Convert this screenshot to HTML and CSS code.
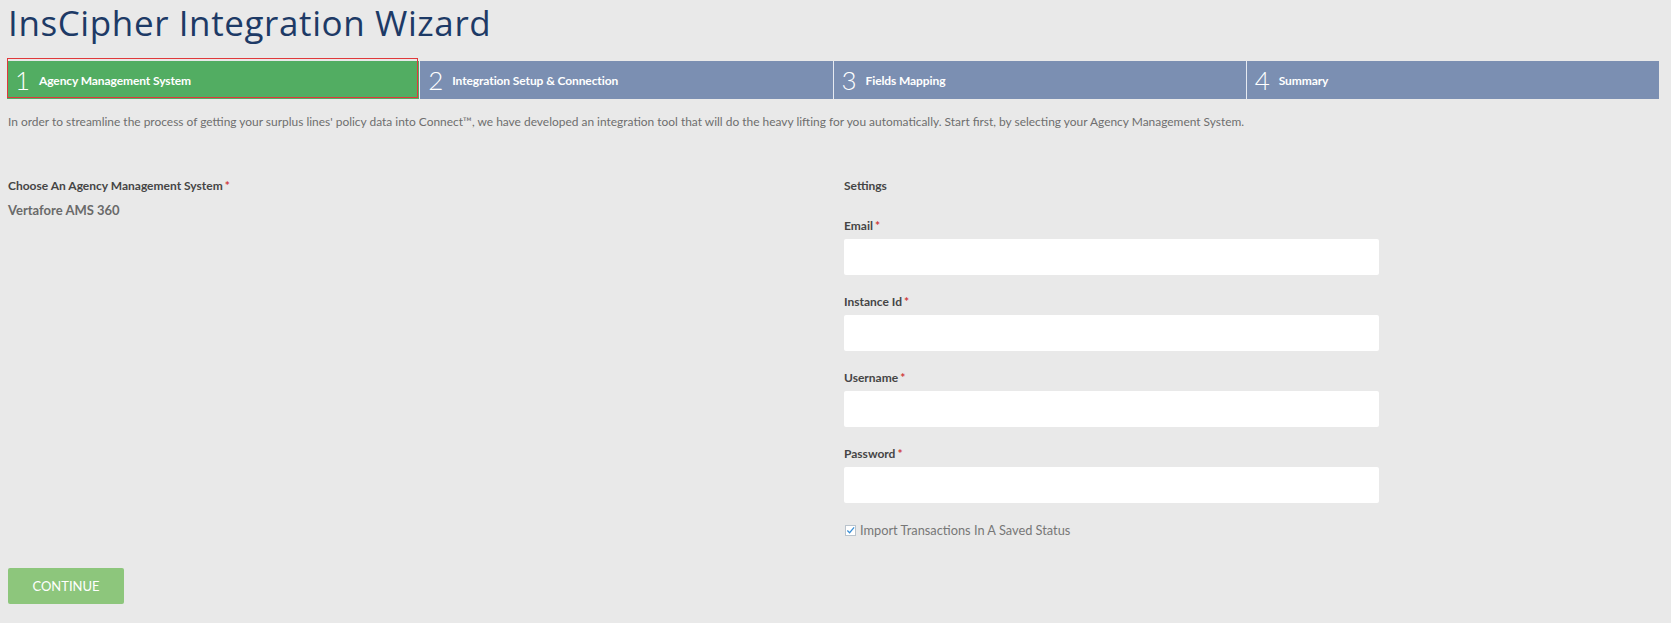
FILE: index.html
```html
<!DOCTYPE html>
<html lang="en">
<head>
<meta charset="utf-8">
<title>InsCipher Integration Wizard</title>
<link rel="stylesheet" href="styles.css">
</head>
<body>
<div class="page">
  <h1 class="title">InsCipher Integration Wizard</h1>
  <ol class="steps">
    <li class="step active"><span class="num">1</span><span class="step-label">Agency Management System</span></li>
    <li class="step"><span class="num">2</span><span class="step-label">Integration Setup &amp; Connection</span></li>
    <li class="step"><span class="num">3</span><span class="step-label">Fields Mapping</span></li>
    <li class="step"><span class="num">4</span><span class="step-label">Summary</span></li>
  </ol>
  <p class="intro">In order to streamline the process of getting your surplus lines' policy data into Connect™, we have developed an integration tool that will do the heavy lifting for you automatically. Start first, by selecting your Agency Management System.</p>
  <div class="columns">
    <div class="col col-left">
      <div class="field-label">Choose An Agency Management System<span class="req">*</span></div>
      <div class="ams">Vertafore AMS 360</div>
    </div>
    <div class="col col-right">
      <div class="field-label settings">Settings</div>
      <div class="field">
        <label class="field-label">Email<span class="req">*</span></label>
        <input class="input" type="text">
      </div>
      <div class="field">
        <label class="field-label">Instance Id<span class="req">*</span></label>
        <input class="input" type="text">
      </div>
      <div class="field">
        <label class="field-label">Username<span class="req">*</span></label>
        <input class="input" type="text">
      </div>
      <div class="field">
        <label class="field-label">Password<span class="req">*</span></label>
        <input class="input" type="password">
      </div>
      <label class="check">
        <span class="box"><svg width="10" height="9" viewBox="0 0 10 9"><path d="M1.5 4.5 L4 7 L9 1" fill="none" stroke="#3a8fd6" stroke-width="1.4"/></svg></span>
        Import Transactions In A Saved Status
      </label>
    </div>
  </div>
  <button class="continue" type="button">CONTINUE</button>
</div>
</body>
</html>
```

FILE: styles.css
```css
* { box-sizing: border-box; }
html, body { margin: 0; padding: 0; background: #e9e9e9; }
body { font-family: Lato, "Liberation Sans", sans-serif; color: #444; }

.page { padding: 0 12px 0 7px; }

.title {
  margin: 0;
  padding: 3px 0 0 1px;
  font-family: "Open Sans", Lato, sans-serif;
  font-weight: 500;
  font-size: 35px;
  line-height: 40px;
  color: #1d3a66;
  letter-spacing: 0.6px;
}

.steps {
  list-style: none;
  margin: 18px 0 0 0;
  padding: 0;
  display: flex;
  height: 38px;
}
.step {
  flex: 1;
  display: flex;
  align-items: center;
  background: #7b8fb2;
  color: #fff;
  border-left: 1px solid #e6eaf1;
  position: relative;
}
.step:first-child { border-left: 0; }
.step.active { background: #52ad62; }
.step.active::after {
  content: "";
  position: absolute;
  left: 0; right: 1px; top: -3px; bottom: 1px;
  border: 1px solid #e0393b;
}
.num {
  width: 32px;
  padding-left: 8px;
  font-size: 26px;
  font-weight: 300;
  line-height: 1;
}
.step-label {
  font-size: 12px;
  font-weight: 700;
  letter-spacing: -0.1px;
}

.intro {
  margin: 15px 0 0 1px;
  font-size: 11.95px;
  line-height: 16px;
  color: #6e6e6e;
}

.columns {
  display: flex;
  margin-top: 48px;
}
.col-left { width: 837px; padding-left: 1px; }
.col-right { width: 535px; }

.field-label {
  display: block;
  font-size: 12px;
  font-weight: 700;
  line-height: 16px;
  color: #454545;
}
.req { color: #d0383a; margin-left: 2px; }
.ams {
  margin-top: 8px;
  font-size: 13px;
  font-weight: 700;
  line-height: 16px;
  color: #6a6a6a;
}
.settings { margin-bottom: 24px; }

.field { margin-bottom: 19px; }
.field .field-label { margin-bottom: 5px; }
.input {
  display: block;
  width: 535px;
  height: 36px;
  border: 0;
  border-radius: 2px;
  background: #fff;
  margin: 0;
  padding: 0 10px;
}

.check {
  display: flex;
  align-items: center;
  gap: 4px;
  font-size: 12.8px;
  line-height: 16px;
  color: #777;
}
.box {
  width: 11px;
  height: 11px;
  border: 1px solid #b9c3cc;
  background: #fff;
  display: flex;
  align-items: center;
  justify-content: center;
  margin-left: 1px;
}

.continue {
  display: block;
  margin: 30px 0 0 1px;
  width: 116px;
  height: 36px;
  border: 0;
  border-radius: 2px;
  background: #8dc67c;
  color: #fff;
  font-family: Lato, "Liberation Sans", sans-serif;
  font-size: 13px;
  cursor: pointer;
}
```
